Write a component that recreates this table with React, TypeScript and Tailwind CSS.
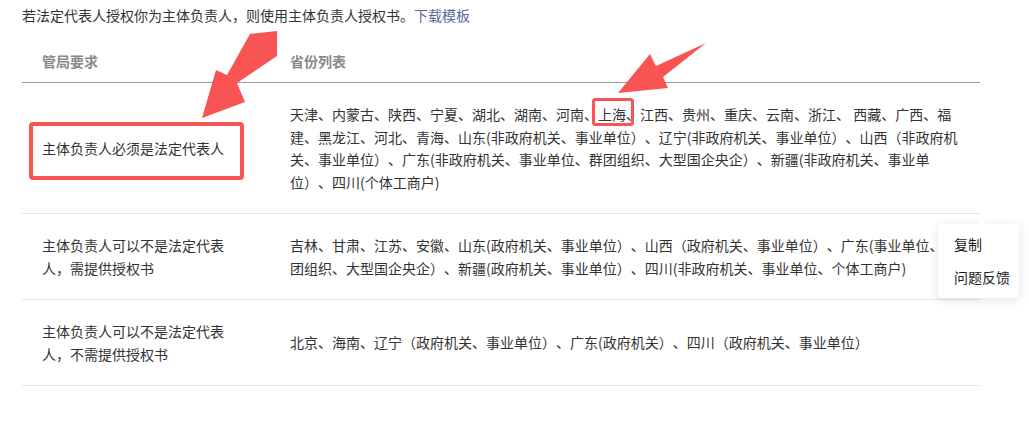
import React from "react";

const rows = [
  {
    req: "主体负责人必须是法定代表人",
    list: "天津、内蒙古、陕西、宁夏、湖北、湖南、河南、上海、江西、贵州、重庆、云南、浙江、 西藏、广西、福建、黑龙江、河北、青海、山东(非政府机关、事业单位）、辽宁(非政府机关、事业单位）、山西（非政府机关、事业单位）、广东(非政府机关、事业单位、群团组织、大型国企央企）、新疆(非政府机关、事业单位）、四川(个体工商户)",
  },
  {
    req: "主体负责人可以不是法定代表人，需提供授权书",
    list: "吉林、甘肃、江苏、安徽、山东(政府机关、事业单位）、山西（政府机关、事业单位）、广东(事业单位、群团组织、大型国企央企）、新疆(政府机关、事业单位）、四川(非政府机关、事业单位、个体工商户)",
  },
  {
    req: "主体负责人可以不是法定代表人，不需提供授权书",
    list: "北京、海南、辽宁（政府机关、事业单位）、广东(政府机关）、四川（政府机关、事业单位）",
  },
];

export default function App() {
  return (
    <div
      className="relative w-[1029px] h-[423px] overflow-hidden bg-white text-[14px] text-[#333] [text-spacing-trim:space-all]"
      style={{ fontFamily: '"Noto Sans CJK SC", "Noto Sans", sans-serif' }}
    >
      <div className="px-[22px] pt-[4px]">
        <p className="leading-[23px]">
          若法定代表人授权你为主体负责人，则使用主体负责人授权书。
          <span className="text-[#576b95]">下载模板</span>
        </p>
        <div className="mt-[13px] w-[958px]">
          <div className="flex border-b border-[#999] pt-[10px] pb-[9px] leading-[23px] font-semibold text-[#8a8a8a]">
            <div className="w-[268px] pl-5">管局要求</div>
            <div className="flex-1">省份列表</div>
          </div>
          {rows.map((r, i) => (
            <div
              key={i}
              className="flex items-center border-b border-[#e6e6e6] py-5 leading-[22.5px]"
            >
              <div className="w-[268px] pl-5">
                <div className="w-[190px]">{r.req}</div>
              </div>
              <div className="flex-1 pr-5">{r.list}</div>
            </div>
          ))}
        </div>
      </div>

      {/* annotations */}
      <svg
        className="pointer-events-none absolute left-0 top-0"
        width="1029"
        height="423"
        viewBox="0 0 1029 423"
      >
        <rect
          x="31"
          y="124"
          width="211"
          height="54"
          rx="2"
          fill="none"
          stroke="#f95454"
          strokeWidth="4"
        />
        <rect
          x="593.5"
          y="99.5"
          width="39"
          height="25"
          rx="2"
          fill="none"
          stroke="#f95454"
          strokeWidth="3"
        />
        <polygon
          points="250,34 277,31 277,56 237,83 245,102 202,118 216,70 227,75"
          fill="#f95454"
        />
        <polygon
          points="706,43 663,77 668,88 618,93 650,54 656,66"
          fill="#f95454"
        />
      </svg>

      {/* context menu */}
      <div className="absolute left-[938px] top-[224px] w-[81px] rounded-[4px] bg-white py-[4px] shadow-[0_2px_10px_rgba(0,0,0,0.12)]">
        <div className="absolute -top-[5px] left-[38px] h-0 w-0 border-x-[6px] border-b-[6px] border-x-transparent border-b-white" />
        <div className="whitespace-nowrap pl-4 leading-[33px] text-[#1a1a1a]">复制</div>
        <div className="whitespace-nowrap pl-4 leading-[33px] text-[#1a1a1a]">问题反馈</div>
      </div>
    </div>
  );
}
